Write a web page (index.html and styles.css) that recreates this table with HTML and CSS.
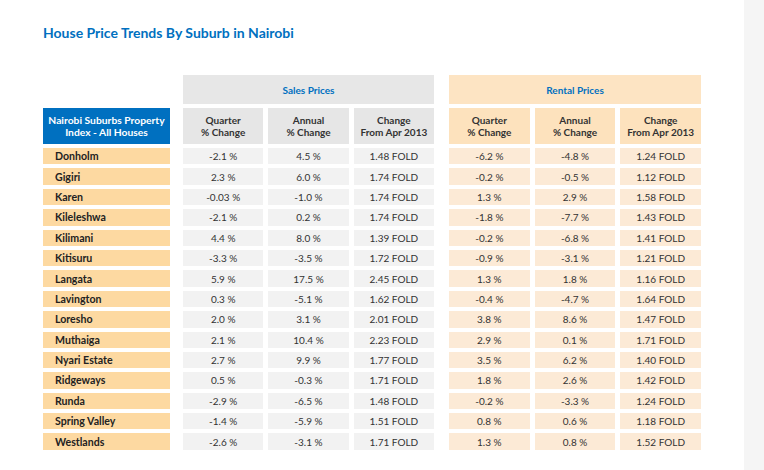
FILE: index.html
```html
<!DOCTYPE html>
<html lang="en">
<head>
    <meta charset="UTF-8">
    <title>House Price Trends By Suburb in Nairobi</title>
    <link rel="stylesheet" href="styles.css">
</head>
<body>
    <div class="page">
        <div class="content">
            <h2 class="title">House Price Trends By Suburb in Nairobi</h2>

            <div class="table">
                <div class="row head-top">
                    <div class="name blank"></div>
                    <div class="group sales"><div class="band">Sales Prices</div></div>
                    <div class="group rental"><div class="band">Rental Prices</div></div>
                </div>
                <div class="row head-sub">
                    <div class="name index">Nairobi Suburbs Property<br>Index - All Houses</div>
                    <div class="group sales">
                        <div class="cell">Quarter<br>% Change</div>
                        <div class="cell">Annual<br>% Change</div>
                        <div class="cell">Change<br>From Apr 2013</div>
                    </div>
                    <div class="group rental">
                        <div class="cell">Quarter<br>% Change</div>
                        <div class="cell">Annual<br>% Change</div>
                        <div class="cell">Change<br>From Apr 2013</div>
                    </div>
                </div>
                <div id="rows"></div>
            </div>
        </div>
        <div class="strip"></div>
    </div>

    <script>
        var data = [
            ["Donholm", "-2.1 %", "4.5 %", "1.48 FOLD", "-6.2 %", "-4.8 %", "1.24 FOLD"],
            ["Gigiri", "2.3 %", "6.0 %", "1.74 FOLD", "-0.2 %", "-0.5 %", "1.12 FOLD"],
            ["Karen", "-0.03 %", "-1.0 %", "1.74 FOLD", "1.3 %", "2.9 %", "1.58 FOLD"],
            ["Kileleshwa", "-2.1 %", "0.2 %", "1.74 FOLD", "-1.8 %", "-7.7 %", "1.43 FOLD"],
            ["Kilimani", "4.4 %", "8.0 %", "1.39 FOLD", "-0.2 %", "-6.8 %", "1.41 FOLD"],
            ["Kitisuru", "-3.3 %", "-3.5 %", "1.72 FOLD", "-0.9 %", "-3.1 %", "1.21 FOLD"],
            ["Langata", "5.9 %", "17.5 %", "2.45 FOLD", "1.3 %", "1.8 %", "1.16 FOLD"],
            ["Lavington", "0.3 %", "-5.1 %", "1.62 FOLD", "-0.4 %", "-4.7 %", "1.64 FOLD"],
            ["Loresho", "2.0 %", "3.1 %", "2.01 FOLD", "3.8 %", "8.6 %", "1.47 FOLD"],
            ["Muthaiga", "2.1 %", "10.4 %", "2.23 FOLD", "2.9 %", "0.1 %", "1.71 FOLD"],
            ["Nyari Estate", "2.7 %", "9.9 %", "1.77 FOLD", "3.5 %", "6.2 %", "1.40 FOLD"],
            ["Ridgeways", "0.5 %", "-0.3 %", "1.71 FOLD", "1.8 %", "2.6 %", "1.42 FOLD"],
            ["Runda", "-2.9 %", "-6.5 %", "1.48 FOLD", "-0.2 %", "-3.3 %", "1.24 FOLD"],
            ["Spring Valley", "-1.4 %", "-5.9 %", "1.51 FOLD", "0.8 %", "0.6 %", "1.18 FOLD"],
            ["Westlands", "-2.6 %", "-3.1 %", "1.71 FOLD", "1.3 %", "0.8 %", "1.52 FOLD"]
        ];

        var html = "";
        data.forEach(function (r) {
            html += '<div class="row data">';
            html += '<div class="name">' + r[0] + '</div>';
            html += '<div class="group sales">';
            for (var i = 1; i <= 3; i++) html += '<div class="cell">' + r[i] + '</div>';
            html += '</div><div class="group rental">';
            for (var j = 4; j <= 6; j++) html += '<div class="cell">' + r[j] + '</div>';
            html += '</div></div>';
        });
        document.getElementById("rows").innerHTML = html;
    </script>
</body>
</html>
```

FILE: styles.css
```css
body {
    margin: 0;
    font-family: Lato, "Open Sans", sans-serif;
    background: #fff;
    color: #333;
}
.page {
    display: flex;
    width: 764px;
    height: 470px;
}
.content {
    width: 744px;
    padding-left: 43px;
    box-sizing: border-box;
}
.strip {
    width: 20px;
    background: #f5f5f5;
}
.title {
    margin: 24px 0 0;
    height: 51px;
    font-size: 14px;
    line-height: 17px;
    font-weight: bold;
    color: #0070c0;
}

.row {
    display: flex;
    margin-bottom: 4px;
}
.name {
    width: 127px;
    margin-right: 13px;
    box-sizing: border-box;
}
.group {
    display: flex;
    gap: 5px;
}
.group.sales {
    width: 251px;
    margin-right: 15px;
}
.group.rental {
    width: 252px;
}
.cell {
    flex: 1;
    display: flex;
    align-items: center;
    justify-content: center;
    text-align: center;
}

/* top band */
.head-top {
    height: 29px;
}
.band {
    flex: 1;
    display: flex;
    align-items: center;
    justify-content: center;
    font-size: 10px;
    font-weight: bold;
    color: #0070c0;
}
.sales .band {
    background: #e7e7e7;
}
.rental .band {
    background: #fde4c3;
}

/* column headings */
.head-sub {
    height: 36px;
}
.head-sub .cell {
    font-size: 10px;
    font-weight: bold;
    line-height: 12px;
    color: #333;
}
.head-sub .sales .cell {
    background: #e6e6e6;
}
.head-sub .rental .cell {
    background: #fde2bd;
}
.index {
    background: #0070c0;
    color: #fff;
    font-size: 10.3px;
    font-weight: bold;
    line-height: 12px;
    text-align: center;
    display: flex;
    align-items: center;
    justify-content: center;
}

/* data rows */
.data {
    height: 16.4px;
}
.data .name {
    background: #fdd9a1;
    font-size: 10.6px;
    font-weight: bold;
    color: #222;
    padding-left: 12px;
    display: flex;
    align-items: center;
}
.data .cell {
    font-size: 10px;
    color: #333;
}
.data .sales .cell {
    background: #f2f2f2;
}
.data .rental .cell {
    background: #fcead6;
}
```
